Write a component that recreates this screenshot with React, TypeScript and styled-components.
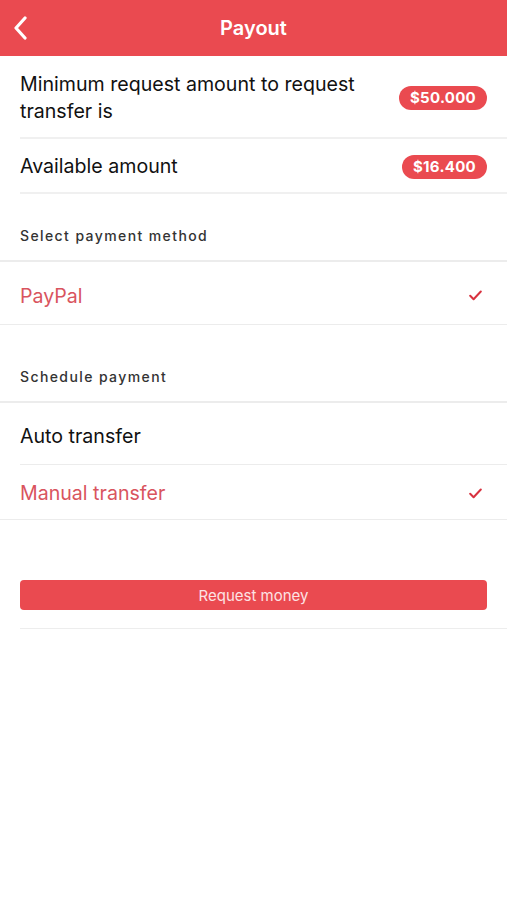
import React from "react";
import styled, { createGlobalStyle } from "styled-components";

const GlobalStyle = createGlobalStyle`
  body {
    margin: 0;
    background: #ffffff;
    font-family: Inter, "Open Sans", sans-serif;
  }
`;

const RED = "#ea4a50";

const Page = styled.div`
  width: 507px;
  min-height: 900px;
  background: #fff;
  display: flex;
  flex-direction: column;
`;

const Header = styled.div`
  height: 56px;
  background: ${RED};
  display: flex;
  align-items: center;
  justify-content: center;
  position: relative;
`;

const Title = styled.h1`
  margin: 0;
  color: #fff;
  font-size: 20px;
  font-weight: 600;
`;

const BackButton = styled.button`
  position: absolute;
  left: 8px;
  top: 14px;
  width: 24px;
  height: 28px;
  padding: 0;
  border: none;
  background: none;
  display: flex;
  align-items: center;
  justify-content: center;
`;

const InfoRow = styled.div<{ $h: number }>`
  min-height: ${(p) => p.$h}px;
  margin-left: 20px;
  padding: 2px 20px 0 0;
  display: flex;
  align-items: center;
  justify-content: space-between;
  border-bottom: 2px solid #f0f0f0;
  box-sizing: border-box;
`;

const InfoText = styled.div`
  font-size: 19.6px;
  line-height: 27px;
  color: #111;
  max-width: 350px;
`;

const Badge = styled.span`
  background: ${RED};
  color: #fff;
  font-weight: 700;
  font-size: 15px;
  height: 24px;
  line-height: 24px;
  padding: 0 11px;
  border-radius: 12px;
  letter-spacing: 0.3px;
`;

const SectionTitle = styled.div<{ $h: number; $pb: number }>`
  height: ${(p) => p.$h}px;
  box-sizing: border-box;
  padding: 0 20px ${(p) => p.$pb}px;
  display: flex;
  align-items: flex-end;
  font-size: 14px;
  font-weight: 500;
  letter-spacing: 1.4px;
  color: #333;
  border-bottom: 2px solid #ececec;
`;

const OptionRow = styled.div<{ $h: number; $selected?: boolean; $pt?: number }>`
  height: ${(p) => p.$h}px;
  box-sizing: border-box;
  display: flex;
  align-items: center;
  justify-content: space-between;
  padding: ${(p) => p.$pt ?? 0}px 25px 0 20px;
  font-size: 19.6px;
  color: ${(p) => (p.$selected ? "#d9545e" : "#111")};
  border-bottom: 1px solid #ececec;
`;

const InsetRow = styled(OptionRow)`
  margin-left: 20px;
  padding-left: 0;
`;

const ButtonArea = styled.div`
  padding: 60px 20px 0;
`;

const RequestButton = styled.button`
  width: 100%;
  height: 30px;
  border: none;
  border-radius: 4px;
  background: ${RED};
  color: #fde3e4;
  font-family: Inter, "Open Sans", sans-serif;
  font-size: 15px;
  padding: 0;
`;

const BottomLine = styled.div`
  margin: 18px 0 0 20px;
  border-bottom: 1px solid #ededed;
`;

const Check = () => (
  <svg width="13" height="11" viewBox="0 0 13 11">
    <path d="M1.2 5.8 L4.6 9.2 L11.8 1.5" fill="none" stroke="#d8323f" strokeWidth="2" strokeLinecap="round" strokeLinejoin="round" />
  </svg>
);

export default function App() {
  return (
    <Page>
      <GlobalStyle />
      <Header>
        <BackButton aria-label="Back">
          <svg width="14" height="24" viewBox="0 0 14 24">
            <path d="M12 2 L3 12 L12 22" fill="none" stroke="#fff" strokeWidth="3.2" strokeLinecap="round" strokeLinejoin="round" />
          </svg>
        </BackButton>
        <Title>Payout</Title>
      </Header>

      <InfoRow $h={83}>
        <InfoText>Minimum request amount to request transfer is</InfoText>
        <Badge>$50.000</Badge>
      </InfoRow>
      <InfoRow $h={55}>
        <InfoText>Available amount</InfoText>
        <Badge>$16.400</Badge>
      </InfoRow>

      <SectionTitle $h={68} $pb={16}>Select payment method</SectionTitle>
      <OptionRow $h={63} $selected $pt={5}>
        PayPal
        <Check />
      </OptionRow>

      <SectionTitle $h={78} $pb={16}>Schedule payment</SectionTitle>
      <InsetRow $h={62} $pt={5}>Auto transfer</InsetRow>
      <OptionRow $h={55} $selected $pt={2}>
        Manual transfer
        <Check />
      </OptionRow>

      <ButtonArea>
        <RequestButton>Request money</RequestButton>
      </ButtonArea>
      <BottomLine />
    </Page>
  );
}
